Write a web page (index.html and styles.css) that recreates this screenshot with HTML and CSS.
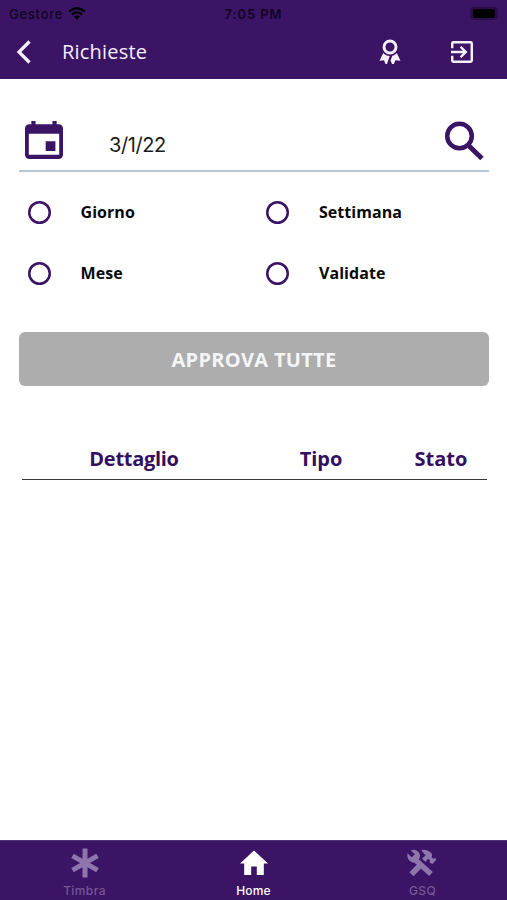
FILE: index.html
```html
<!DOCTYPE html>
<html lang="it">
<head>
<meta charset="utf-8">
<title>Richieste</title>
<link rel="stylesheet" href="styles.css">
</head>
<body>
<header class="header">
  <div class="status">
    <div class="carrier"><span>Gestore</span>
      <svg class="wifi" viewBox="0 0 18 13"><path d="M1 4.600Q9-2.200 17 4.600M3.900 7.500Q9 3.300 14.100 7.500" fill="none" stroke="currentColor" stroke-width="2.300"/><path d="M6 9.700Q9 7.400 12 9.700L9 12.800Z" fill="currentColor"/></svg>
    </div>
    <time class="clock">7:05 PM</time>
    <div class="battery"><i></i></div>
  </div>
  <nav class="nav">
    <svg class="back" viewBox="0 0 16 24"><path d="M13.500 1.500 3 12l10.500 10.500" fill="none" stroke="currentColor" stroke-width="3.200"/></svg>
    <h1 class="title">Richieste</h1>
    <svg class="award" viewBox="0 0 22 26"><circle cx="11" cy="8" r="6" fill="none" stroke="currentColor" stroke-width="2.900"/><path d="M4.200 14C6 15.900 8.200 16.900 10.700 17L8 25H6.500L5 21.300.5 21.800ZM17.800 14C16.300 15.600 15 16.400 13.300 16.800L11.500 21.400 13 25H14.800L16.500 21.300 21.500 21.800Z" fill="currentColor"/></svg>
    <svg class="exit" viewBox="3 3 18 18"><path d="M10.090 15.590 11.500 17l5-5-5-5-1.410 1.410L12.670 11H3v2h9.670l-2.580 2.590zM19 3H5a2 2 0 0 0-2 2v4h2V5h14v14H5v-4H3v4a2 2 0 0 0 2 2h14a2 2 0 0 0 2-2V5a2 2 0 0 0-2-2z" fill="currentColor"/></svg>
  </nav>
</header>
<main class="main">
  <div class="date-row">
    <svg class="calendar" viewBox="3 1 18 18" preserveAspectRatio="none"><path d="M19 2.500h-1V1h-2v1.500H8V1H6v1.500H5a2 2 0 0 0-2 2V17a2 2 0 0 0 2 2h14a2 2 0 0 0 2-2V4.500a2 2 0 0 0-2-2zM19.200 17H4.800V7h14.400v10zM12.800 10.600h4.600v4.600h-4.600z" fill="currentColor" fill-rule="evenodd"/></svg>
    <span class="date">3/1/22</span>
    <svg class="search" viewBox="0 0 40 40"><circle cx="15.500" cy="15" r="12.300" fill="none" stroke="currentColor" stroke-width="4.500"/><path d="m25 25 13 12.500" stroke="currentColor" stroke-width="5"/></svg>
  </div>
  <div class="options">
    <label class="option"><i class="radio"></i><span>Giorno</span></label>
    <label class="option"><i class="radio"></i><span>Settimana</span></label>
    <label class="option"><i class="radio"></i><span>Mese</span></label>
    <label class="option"><i class="radio"></i><span>Validate</span></label>
  </div>
  <button class="approve">APPROVA TUTTE</button>
  <div class="table-head"><span class="detail">Dettaglio</span><span>Tipo</span><span>Stato</span></div>
</main>
<footer class="tabs">
  <div class="tab">
    <svg class="tab-icon" viewBox="0 0 30 30"><path d="M15 .500v29M2.500 7.800l25 14.400M27.500 7.800l-25 14.400" stroke="currentColor" stroke-width="5"/></svg>
    <span>Timbra</span>
  </div>
  <div class="tab active">
    <svg class="tab-icon" viewBox="0 0 30 30"><path d="M15 2.500 29 15.500h-4.200V27h-7v-8.500h-5.600V27h-7V15.500H1z" fill="currentColor"/></svg>
    <span>Home</span>
  </div>
  <div class="tab">
    <svg class="tab-icon tools" viewBox="0 0 30 30"><path d="M9.500 12 25 26" stroke="currentColor" stroke-width="5.500"/><path d="M5.500 26.300 15 16.500" stroke="currentColor" stroke-width="5.800"/><path d="M1.500 5.200 5.700 9.200 8.900 6.200 4.700 2.400C9 .5 13.700 3.200 14 7.600L13.600 10.200 10 14.500C4.800 15.500.2 10.800 1.500 5.200ZM15.200 2C19.500 1.400 23 2.300 26.200 6.200L25.700 9.400 27.400 10.700 29.500 9.800 30 12 26.500 16 23.500 14.500 24 12.500 22 10.800 19.500 14 16 10.500 19.500 7.400Z" fill="currentColor"/></svg>
    <span>GSQ</span>
  </div>
</footer>
</body>
</html>
```
FILE: styles.css
```css
* { box-sizing: border-box; }
body {
  margin: 0;
  height: 900px;
  display: flex;
  flex-direction: column;
  overflow: hidden;
  background: #fff;
  color: #111;
  font-family: "Open Sans", "Noto Sans", sans-serif;
}
svg { display: block; flex: none; }
.header { height: 79px; background: #3b1466; color: #f5effa; }
.status {
  height: 27px;
  display: grid;
  grid-template-columns: 1fr auto 1fr;
  align-items: center;
  padding: 0 9px;
  font: 500 13px Inter, sans-serif;
  color: #10051f;
}
.carrier { display: flex; align-items: center; gap: 5px; letter-spacing: .75px; }
.wifi { width: 18px; height: 13px; color: #000; }
.clock { font-weight: 600; letter-spacing: .9px; }
.battery { justify-self: end; width: 28px; height: 13px; padding: 2px; border-radius: 4px; background: #2a0c4b; }
.battery i { display: block; width: 22px; height: 9px; margin-left: 1px; border-radius: 2px; background: #000; }
.nav { height: 50px; display: flex; align-items: center; padding: 0 34px 0 16px; }
.back { width: 16px; height: 24px; }
.title { flex: 1; margin: -2px 0 0 30px; font: 400 20px "Open Sans", sans-serif; letter-spacing: .2px; }
.award { width: 22px; height: 26px; margin: 0 50px 0 0; }
.exit { width: 22px; height: 22px; }
.main { flex: 1; padding: 0 18px 0 19px; }
.date-row {
  height: 93px;
  display: flex;
  align-items: flex-start;
  padding: 42px 5px 0 6px;
  border-bottom: 2px solid #b7c5d0;
  color: #3b1466;
}
.calendar { width: 38px; height: 38px; }
.date { flex: 1; margin: 10px 0 0 46px; color: #1b1b1b; font: 400 20px/28px Inter, sans-serif; letter-spacing: -.4px; }
.search { width: 40px; height: 40px; }
.options {
  display: grid;
  grid-template-columns: 238.5px 1fr;
  grid-auto-rows: 61px;
  margin-top: 9.500px;
  padding-left: 8.500px;
}
.option { display: flex; align-items: center; gap: 30px; font-weight: 700; font-size: 16px; color: #0a0a0a; }
.option span { margin-top: -1px; letter-spacing: .05px; }
.radio { width: 23px; height: 23px; border-radius: 50%; box-shadow: inset 0 0 0 2.500px #3b1466; }
.approve {
  display: block;
  width: 100%;
  height: 54px;
  margin-top: 28.500px;
  padding: 0;
  border: 0;
  border-radius: 6px;
  background: #adadad;
  color: #f4f5f6;
  font: 700 20px "Open Sans", sans-serif;
  letter-spacing: .3px;
}
.table-head {
  display: grid;
  grid-template-columns: 224px 150px 90px;
  width: 465px;
  height: 43px;
  margin: 51px 0 0 3px;
  border-bottom: 1px solid #3c363f;
  color: #351061;
  font-weight: 700;
  font-size: 20px;
  line-height: 43px;
  text-align: center;
}
.detail { letter-spacing: -.3px; }
.tabs { height: 60px; display: grid; grid-template-columns: repeat(3, 1fr); background: #3b1466; border-top: 1px solid #51327b; }
.tab { display: flex; flex-direction: column; align-items: center; padding-top: 7px; color: #8f75ad; font: 500 12px/15px Inter, sans-serif; letter-spacing: .4px; }
.tab span { margin-top: 5px; color: #765696; }
.tab-icon { width: 30px; height: 30px; }
.tools { margin-left: -3px; }
.active, .active span { color: #fff; }
.active { letter-spacing: .15px; }
```
